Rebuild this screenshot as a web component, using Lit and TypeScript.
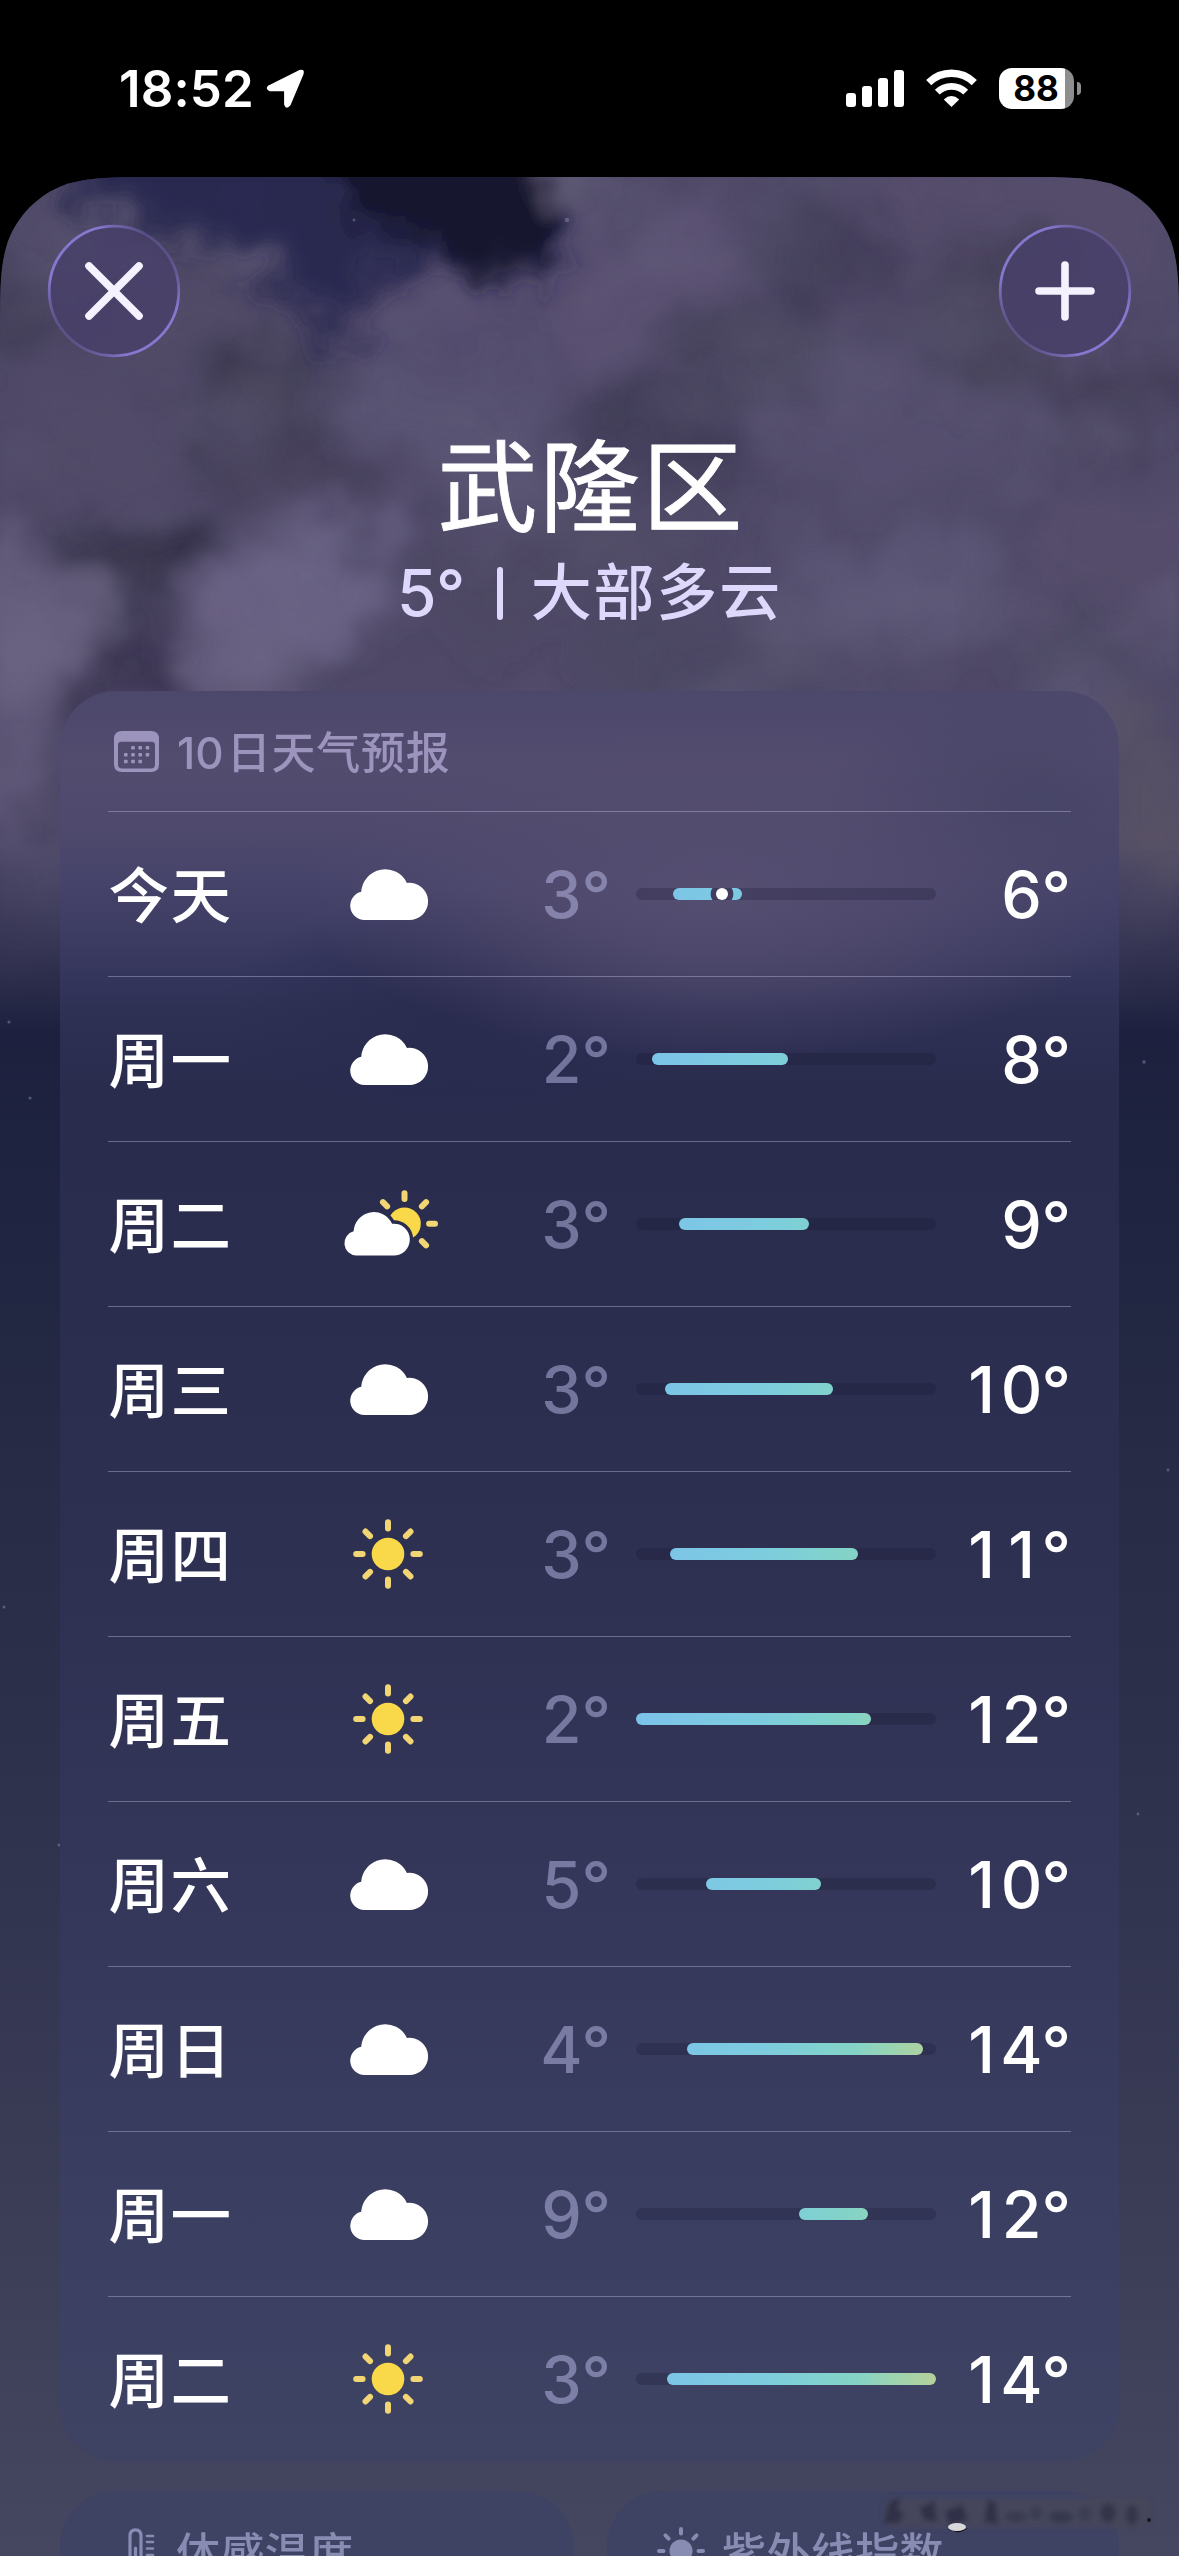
import { LitElement, html, svg, css } from "lit";
import { customElement, property } from "lit/decorators.js";

type Icon = "cloud" | "sun" | "partly";

interface Day {
  name: string;
  icon: Icon;
  low: number;
  high: number;
  from: number;
  to: number;
  now?: number;
}

const DAYS: Day[] = [
  { name: "今天", icon: "cloud", low: 3, high: 6, from: 37, to: 106, now: 86 },
  { name: "周一", icon: "cloud", low: 2, high: 8, from: 16, to: 152 },
  { name: "周二", icon: "partly", low: 3, high: 9, from: 43, to: 173 },
  { name: "周三", icon: "cloud", low: 3, high: 10, from: 29, to: 197 },
  { name: "周四", icon: "sun", low: 3, high: 11, from: 34, to: 222 },
  { name: "周五", icon: "sun", low: 2, high: 12, from: 0, to: 235 },
  { name: "周六", icon: "cloud", low: 5, high: 10, from: 70, to: 185 },
  { name: "周日", icon: "cloud", low: 4, high: 14, from: 51, to: 287 },
  { name: "周一", icon: "cloud", low: 9, high: 12, from: 163, to: 232 },
  { name: "周二", icon: "sun", low: 3, high: 14, from: 31, to: 300 },
];

const CLOUD =
  "M14.3 51A14.3 14.3 0 0 1 11.2 22.8A24.1 24.1 0 0 1 57 14A18.6 18.6 0 1 1 58.4 51Z";

const ray = (deg: number, r1: number, r2: number) => {
  const a = (deg * Math.PI) / 180;
  const c = Math.cos(a);
  const s = Math.sin(a);
  return svg`<line x1=${c * r1} y1=${s * r1} x2=${c * r2} y2=${s * r2}></line>`;
};

// Equal-width digit cells keep the temperature columns aligned.
const digits = (n: number) => html`${[...String(n)].map((c) => html`<span class="digit">${c}</span>`)}°`;

@customElement("weather-icon")
export class WeatherIcon extends LitElement {
  @property() kind: Icon = "cloud";

  static styles = css`
    :host { display: block; line-height: 0; }
    svg { display: block; overflow: visible; }
    .rays { stroke: #f1d673; stroke-width: 6; stroke-linecap: round; }
    .disc { fill: #f9d849; }
    .cloud { fill: #fff; }
  `;

  render() {
    if (this.kind === "sun") {
      return html`<svg width="72" height="72" viewBox="-36 -36 72 72">
        <circle class="disc" r="16.3"></circle>
        <g class="rays">${[0, 45, 90, 135, 180, 225, 270, 315].map((d) => ray(d, 25.4, 31.8))}</g>
      </svg>`;
    }
    if (this.kind === "partly") {
      return html`<svg width="96" height="72" viewBox="-48 -36 96 72">
        <mask id="gap" maskUnits="userSpaceOnUse" x="-48" y="-40" width="110" height="90">
          <rect x="-48" y="-40" width="110" height="90" fill="#fff"></rect>
          <path transform="translate(-43.8 -12.2) scale(.84 .857)" d=${CLOUD} fill="#000" stroke="#000" stroke-width="8"></path>
        </mask>
        <g mask="url(#gap)"><circle class="disc" cx="16.5" cy="-.3" r="16.3"></circle></g>
        <g class="rays" transform="translate(16.5 -.3)">${[0, 45, 225, 270, 315].map((d) => ray(d, 24.6, 30.5))}</g>
        <path class="cloud" transform="translate(-43.8 -12.2) scale(.84 .857)" d=${CLOUD}></path>
      </svg>`;
    }
    return html`<svg width="77" height="51" viewBox="0 0 77 51"><path class="cloud" d=${CLOUD}></path></svg>`;
  }
}

@customElement("range-bar")
export class RangeBar extends LitElement {
  @property({ attribute: false }) day!: Day;

  static styles = css`
    :host { display: block; }
    .track { position: relative; width: 300px; height: 12px; border-radius: 6px; background: rgba(22, 20, 44, 0.24); }
    .fill {
      position: absolute; top: 0; height: 12px; border-radius: 6px;
      background-image: linear-gradient(90deg, #7cc2ea 0, #7dc9e3 28%, #7dcddc 46%, #80d1d0 60%, #85d3c5 74%, #9cd4b0 86%, #b5d09b 100%);
      background-size: 300px 12px;
    }
    .dot {
      position: absolute; top: 0; width: 12px; height: 12px; margin-left: -6px;
      border-radius: 50%; background: #fff;
    }
    .ring {
      position: absolute; top: 0; width: 24px; height: 12px; margin-left: -12px;
      background: radial-gradient(circle at 50% 50%, #403d60 0 10.8px, transparent 11.8px);
    }
  `;

  render() {
    const { from, to, now } = this.day;
    return html`<div class="track">
      <div class="fill" style="left:${from}px;width:${to - from}px;background-position:${-from}px 0"></div>
      ${now === undefined
        ? null
        : html`<div class="ring" style="left:${now}px"></div><div class="dot" style="left:${now}px"></div>`}
    </div>`;
  }
}

interface Puff { x: number; y: number; rx: number; ry: number; c: string; o: number }

const PUFFS: Puff[] = [
  { x: 1010, y: 230, rx: 200, ry: 110, c: "#564e6d", o: 0.8 },
  { x: 640, y: 290, rx: 110, ry: 90, c: "#5b5272", o: 0.9 },
  { x: 430, y: 350, rx: 140, ry: 80, c: "#554e6e", o: 0.9 },
  { x: 190, y: 310, rx: 90, ry: 60, c: "#524a67", o: 0.9 },
  { x: 830, y: 240, rx: 60, ry: 70, c: "#3f3c56", o: 0.8 },
  { x: 980, y: 310, rx: 80, ry: 70, c: "#413f56", o: 0.7 },
  { x: 20, y: 310, rx: 60, ry: 60, c: "#403d54", o: 0.7 },
  { x: 750, y: 350, rx: 110, ry: 50, c: "#47435d", o: 0.8 },
  { x: 270, y: 390, rx: 90, ry: 60, c: "#3d3a52", o: 0.9 },
  { x: 110, y: 440, rx: 90, ry: 60, c: "#514b68", o: 0.9 },
  { x: 450, y: 420, rx: 120, ry: 60, c: "#5a5373", o: 0.9 },
  { x: 660, y: 440, rx: 90, ry: 50, c: "#3f3b56", o: 0.8 },
  { x: 900, y: 440, rx: 150, ry: 60, c: "#554f6e", o: 0.9 },
  { x: 1100, y: 400, rx: 90, ry: 40, c: "#3d3a51", o: 0.8 },
  { x: 300, y: 480, rx: 90, ry: 40, c: "#433f59", o: 0.8 },
  { x: 1120, y: 540, rx: 90, ry: 70, c: "#544e6c", o: 0.9 },
  { x: 140, y: 575, rx: 85, ry: 65, c: "#34314a", o: 1 },
  { x: 140, y: 675, rx: 65, ry: 50, c: "#3b3752", o: 0.95 },
  { x: 15, y: 620, rx: 65, ry: 90, c: "#68617f", o: 0.9 },
  { x: 305, y: 595, rx: 105, ry: 65, c: "#6a6385", o: 0.95 },
  { x: 225, y: 665, rx: 70, ry: 50, c: "#6b6384", o: 0.85 },
  { x: 560, y: 570, rx: 140, ry: 50, c: "#4c4863", o: 0.8 },
  { x: 900, y: 590, rx: 130, ry: 60, c: "#5b5576", o: 0.9 },
  { x: 700, y: 660, rx: 110, ry: 40, c: "#4a4761", o: 0.8 },
  { x: 1080, y: 640, rx: 80, ry: 40, c: "#4b4762", o: 0.8 },
  { x: 1150, y: 790, rx: 45, ry: 90, c: "#565165", o: 0.9 },
  { x: 15, y: 760, rx: 45, ry: 80, c: "#615a79", o: 0.9 },
  { x: 50, y: 880, rx: 50, ry: 50, c: "#4a4667", o: 0.8 },
];

@customElement("night-sky")
export class NightSky extends LitElement {
  static styles = css`
    :host { display: block; }
    svg { display: block; }
  `;

  render() {
    return html`<svg width="1179" height="2379" viewBox="0 177 1179 2379">
      <defs>
        <linearGradient id="sky" gradientUnits="userSpaceOnUse" x1="0" y1="177" x2="0" y2="2556">
          <stop offset="0" stop-color="#1d2044"></stop>
          <stop offset=".34" stop-color="#1c203e"></stop>
          <stop offset=".45" stop-color="#202541"></stop>
          <stop offset=".54" stop-color="#272b45"></stop>
          <stop offset=".65" stop-color="#2d304b"></stop>
          <stop offset=".85" stop-color="#3b3d57"></stop>
          <stop offset="1" stop-color="#454660"></stop>
        </linearGradient>
        <linearGradient id="fade" gradientUnits="userSpaceOnUse" x1="0" y1="177" x2="0" y2="1060">
          <stop offset="0" stop-color="#fff"></stop>
          <stop offset=".76" stop-color="#fff"></stop>
          <stop offset=".88" stop-color="#777"></stop>
          <stop offset=".97" stop-color="#000"></stop>
        </linearGradient>
        <mask id="bank" maskUnits="userSpaceOnUse" x="0" y="177" width="1179" height="900">
          <rect x="0" y="177" width="1179" height="900" fill="url(#fade)"></rect>
        </mask>
        <filter id="soft" filterUnits="userSpaceOnUse" x="-100" y="77" width="1379" height="1100">
          <feGaussianBlur stdDeviation="20" result="b"></feGaussianBlur>
          <feTurbulence type="fractalNoise" baseFrequency=".009" numOctaves="5" seed="7" result="n"></feTurbulence>
          <feDisplacementMap in="b" in2="n" scale="130" xChannelSelector="R" yChannelSelector="G" result="d"></feDisplacementMap>
          <feGaussianBlur in="d" stdDeviation="4"></feGaussianBlur>
        </filter>
        <filter id="edge" filterUnits="userSpaceOnUse" x="-100" y="77" width="1379" height="400">
          <feGaussianBlur stdDeviation="12" result="b"></feGaussianBlur>
          <feTurbulence type="fractalNoise" baseFrequency=".018" numOctaves="4" seed="4" result="n"></feTurbulence>
          <feDisplacementMap in="b" in2="n" scale="80" xChannelSelector="R" yChannelSelector="G" result="d"></feDisplacementMap>
          <feGaussianBlur in="d" stdDeviation="4.5"></feGaussianBlur>
        </filter>
        <filter id="dark" x="0" y="0" width="100%" height="100%">
          <feTurbulence type="fractalNoise" baseFrequency=".006 .007" numOctaves="4" seed="11"></feTurbulence>
          <feColorMatrix values="0 0 0 0 .18  0 0 0 0 .17  0 0 0 0 .27  2.2 0 0 0 -.95"></feColorMatrix>
          <feGaussianBlur stdDeviation="4"></feGaussianBlur>
        </filter>
      </defs>
      <rect x="0" y="177" width="1179" height="2379" fill="url(#sky)"></rect>
      <g mask="url(#bank)">
        <rect x="0" y="177" width="1179" height="900" fill="#4f4967"></rect>
        <g filter="url(#soft)">
          ${PUFFS.map((p) => svg`<ellipse cx=${p.x} cy=${p.y} rx=${p.rx} ry=${p.ry} fill=${p.c} opacity=${p.o}></ellipse>`)}
        </g>
        <rect x="0" y="177" width="1179" height="900" filter="url(#dark)" opacity=".3"></rect>
      </g>
      <g filter="url(#edge)">
        <path fill="#262750" opacity=".95" d="M70 130H540L570 200L580 240L545 270L515 298L480 262L410 258L385 290L360 338L325 335L295 300L250 250L185 245L140 228L85 205Z"></path>
        <path fill="#14162e" d="M310 130H530L572 215L540 258L512 292L480 258L425 240L340 215Z"></path>
        <path fill="#5c5672" d="M535 140H610V192L568 206L538 195Z"></path>
      </g>
      <g fill="#8a8ab0" opacity=".5">
        <circle cx="567" cy="220" r="2.2"></circle><circle cx="354" cy="220" r="1.4"></circle>
        <circle cx="9" cy="1022" r="1.6"></circle><circle cx="30" cy="1098" r="1.6"></circle>
        <circle cx="1144" cy="1062" r="1.8"></circle><circle cx="1168" cy="1470" r="1.5"></circle>
        <circle cx="4" cy="1607" r="1.5"></circle><circle cx="59" cy="1845" r="1.5"></circle>
        <circle cx="1138" cy="1814" r="1.4"></circle>
      </g>
    </svg>`;
  }
}

@customElement("app-root")
export class AppRoot extends LitElement {
  static styles = css`
    :host {
      display: block; width: 1179px; height: 2556px; overflow: hidden; background: #000;
      font-family: Inter, "Noto Sans CJK SC", sans-serif; color: #fff;
    }
    svg { display: block; overflow: visible; }
    .status {
      height: 177px; box-sizing: border-box; padding: 57px 98px 0 119px;
      display: flex; justify-content: space-between; align-items: flex-start;
    }
    .clock { display: flex; align-items: center; gap: 12px; height: 62px; font-size: 51px; font-weight: 600; letter-spacing: 0.1px; }
    .clock svg { margin-top: 1px; }
    .radios { display: flex; align-items: center; height: 62px; }
    .signal { margin-right: 22px; }
    .wifi { margin-right: 22px; }
    .battery { display: flex; align-items: center; gap: 3px; }
    .cell {
      width: 75px; height: 41px; border-radius: 13px; box-sizing: border-box; padding-right: 1px;
      background: linear-gradient(90deg, #fff 66px, #8e8e8e 66px);
      color: #000; font-size: 35px; font-weight: 700; line-height: 41px; text-align: center;
    }
    .nub { width: 4px; height: 13px; border-radius: 0 4px 4px 0; background: #8e8e8e; }

    .sheet {
      position: relative; height: 2379px; overflow: hidden;
      clip-path: path("M0 157.5C0 112 0 89.4 7.7 65C17.4 38.4 38.4 17.4 65 7.7C89.4 0 112 0 157.5 0H1021.5C1067 0 1089.6 0 1114 7.7C1140.6 17.4 1161.6 38.4 1171.3 65C1179 89.4 1179 112 1179 157.5V2379H0Z");
    }
    .sky { position: absolute; inset: 0; }
    .page { position: relative; display: flex; flex-direction: column; }
    .actions { display: flex; justify-content: space-between; padding: 48px 48px 0; }
    .heading { display: flex; flex-direction: column; align-items: center; height: 334px; }
    .place {
      margin-top: 67px; font-size: 100px; line-height: 128px; letter-spacing: 2.4px; font-weight: 400;
      padding-left: 3px; -webkit-text-stroke: 0.9px #fff;
    }
    .now {
      display: flex; align-items: center; margin-top: 1px; height: 80px;
      color: #ddd8fc; font-size: 61px; line-height: 80px; font-weight: 500;
    }
    .now .deg { font-size: 64px; letter-spacing: -0.5px; }
    .now .sep { width: 6px; height: 53px; border-radius: 3px; background: #ddd8fc; margin: 0 28px 0 32px; }
    .now .sky-text { letter-spacing: 1.8px; }

    .panel { border-radius: 56px; }
    .forecast {
      margin: 0 60px; height: 1770px; box-sizing: border-box; padding: 0 48px;
      background:
        radial-gradient(ellipse 420px 170px at 660px 200px, rgba(86, 79, 114, 0.95), rgba(84, 77, 112, 0.6) 50%, rgba(80, 74, 110, 0) 100%),
        radial-gradient(ellipse 200px 120px at 960px 120px, rgba(64, 64, 98, 0.7), rgba(64, 64, 98, 0)),
        radial-gradient(ellipse 240px 120px at 400px 320px, rgba(40, 42, 78, 0.9), rgba(40, 42, 78, 0)),
        linear-gradient(180deg, #4c486b 0, #524c6f 70px, #4f4a6d 130px, #46436a 190px, #3a3a60 260px, #2e3054 320px, #2a2c4e 400px, #2b2d4e 600px, #2e3052 850px, #343759 1200px, #3b3f61 1550px, #3e4263 1770px);
    }
    .caption { display: flex; align-items: center; color: #9c94bd; font-size: 44px; font-weight: 500; letter-spacing: 0.8px; height: 120px; }
    .caption svg { flex: none; }
    .forecast .caption svg { margin: 0 18px 0 6px; }
    .forecast .caption span { margin-top: -3px; }
    .num { margin-right: 3px; letter-spacing: 0; }
    .row {
      display: grid; grid-template-columns: 200px 161px 140px 27px 300px 135px; align-items: center;
      height: 165px; box-sizing: border-box; border-top: 1px solid rgba(190, 188, 225, 0.42);
    }
    .day { font-size: 60.5px; font-weight: 500; letter-spacing: 1.5px; line-height: 80px; padding: 3px 0 0 0.5px; }
    .icon { display: flex; justify-content: center; padding-right: 1px; }
    .temp { font-size: 64.5px; font-weight: 500; text-align: right; line-height: 80px; padding-top: 1px; }
    .digit { display: inline-flex; justify-content: center; width: 40px; }
    .low { color: rgba(192, 192, 236, 0.49); margin-right: -2px; }
    .bar { grid-column: 5; }

    .tiles { display: grid; grid-template-columns: 514px 512px; gap: 33px; padding: 30px 60px 0; }
    .tile { height: 400px; background: #3e4263; padding: 0 0 0 68px; }
    .tile .caption { color: #888bb2; letter-spacing: 0.4px; }
    .tile .caption .term { margin-right: 21px; }
    .tile.uv { padding-left: 50px; }
    .tile .caption .uvi { margin-right: 17px; }
    .smudge { position: absolute; left: 870px; top: 2310px; }
  `;

  private ring(label: string, glyph: unknown) {
    return html`<svg width="132" height="132" viewBox="0 0 132 132" role="button" aria-label=${label}>
      <defs>
        <linearGradient id="rim" x1="1" y1="0" x2="0" y2="1">
          <stop offset=".1" stop-color="#7d6dc0" stop-opacity=".15"></stop>
          <stop offset=".32" stop-color="#8677cf" stop-opacity="1"></stop>
          <stop offset=".7" stop-color="#8677cf" stop-opacity="1"></stop>
          <stop offset=".9" stop-color="#7d6dc0" stop-opacity=".15"></stop>
        </linearGradient>
      </defs>
      <circle cx="66" cy="66" r="64.8" fill="#483f68" fill-opacity=".85" stroke="url(#rim)" stroke-width="2.8"></circle>
      <g stroke="#f5f2ff" stroke-width="7.6" stroke-linecap="round">${glyph}</g>
    </svg>`;
  }

  render() {
    return html`
      <div class="status">
        <div class="clock">
          <span>18:52</span>
          <svg width="39" height="40" viewBox="0 0 39 40">
            <path d="M3 17.5L34 2.2Q37.600 .9 36.400 4.700L23.500 35.500Q20.500 39.500 19.300 35.500V22.500Q19.300 21 17.800 21H4Q.500 19.800 3 17.500Z" fill="#fff" stroke="#fff" stroke-width="2.400" stroke-linejoin="round"></path>
          </svg>
        </div>
        <div class="radios">
          <svg class="signal" width="58" height="37" viewBox="0 0 58 37" fill="#fff">
            <rect x="0" y="23" width="10" height="14" rx="3"></rect>
            <rect x="16" y="16" width="10" height="21" rx="3"></rect>
            <rect x="32" y="8" width="10" height="29" rx="3"></rect>
            <rect x="48" y="0" width="10" height="37" rx="3"></rect>
          </svg>
          <svg class="wifi" width="51" height="37" viewBox="0 0 51 37">
            <path d="M2.700 13.200A32.500 32.500 0 0 1 48.300 13.200" fill="none" stroke="#fff" stroke-width="7.400" transform="translate(0 -.6)"></path>
            <path d="M11.300 22.200A20 20 0 0 1 39.700 22.200" fill="none" stroke="#fff" stroke-width="6.800"></path>
            <path d="M25.500 37L17.800 29.400Q25.500 22.600 33.200 29.400Z" fill="#fff"></path>
          </svg>
          <div class="battery"><div class="cell">88</div><div class="nub"></div></div>
        </div>
      </div>
      <div class="sheet">
        <night-sky class="sky"></night-sky>
        <div class="page">
          <div class="actions">
            ${this.ring("关闭", svg`<path d="M41 41L91 91M91 41L41 91"></path>`)}
            ${this.ring("添加", svg`<path d="M66 40V92M40 66H92"></path>`)}
          </div>
          <div class="heading">
            <div class="place">武隆区</div>
            <div class="now"><span class="deg">5°</span><span class="sep"></span><span class="sky-text">大部多云</span></div>
          </div>
          <div class="panel forecast">
            <div class="caption">
              <svg width="45" height="41" viewBox="0 0 45 41" fill="#9c94bd">
                <path fill-rule="evenodd" d="M8 0H37Q45 0 45 8V33Q45 41 37 41H8Q0 41 0 33V8Q0 0 8 0ZM7.500 10.800Q4 10.800 4 14V33.500Q4 37.400 8 37.400H37Q41 37.400 41 33.500V14Q41 10.800 37.500 10.800Z"></path>
                ${[[19, 16.7], [26.2, 16.7], [33.5, 16.7], [11.8, 23.7], [19, 23.7], [26.2, 23.7], [33.5, 23.7], [11.8, 30.5], [19, 30.5], [26.2, 30.5]].map(
                  ([x, y]) => svg`<rect x=${x - 1.8} y=${y - 1.8} width="3.6" height="3.6" rx=".8"></rect>`
                )}
              </svg>
              <span><span class="num">10</span>日天气预报</span>
            </div>
            ${DAYS.map(
              (d) => html`<div class="row">
                <div class="day">${d.name}</div>
                <div class="icon"><weather-icon .kind=${d.icon}></weather-icon></div>
                <div class="temp low">${digits(d.low)}</div>
                <range-bar class="bar" .day=${d}></range-bar>
                <div class="temp">${digits(d.high)}</div>
              </div>`
            )}
          </div>
          <div class="tiles">
            <div class="panel tile">
              <div class="caption">
                <svg class="term" width="27" height="46" viewBox="0 0 27 46" fill="none" stroke="#888bb2" stroke-width="3.200" stroke-linecap="round">
                  <path d="M2 30V8Q2 1.800 7.500 1.800T13 8V30A8.500 8.500 0 1 1 2 30Z"></path>
                  <path d="M7.500 20V34"></path>
                  <path d="M19 8H25M19 14H25M19 20.500H25M19 27H25" stroke-width="2.600"></path>
                </svg>
                <span>体感温度</span>
              </div>
            </div>
            <div class="panel tile uv">
              <div class="caption">
                <svg class="uvi" width="48" height="48" viewBox="-24 -24 48 48" stroke="#888bb2" stroke-width="4" stroke-linecap="round">
                  <circle r="11.500" fill="#888bb2" stroke="none"></circle>
                  ${[0, 45, 90, 135, 180, 225, 270, 315].map((d) => ray(d, 17.5, 22))}
                </svg>
                <span>紫外线指数</span>
              </div>
            </div>
          </div>
        </div>
        <svg class="smudge" width="290" height="60" viewBox="870 2487 290 60">
          <defs><filter id="blur" x="-30%" y="-60%" width="160%" height="220%"><feGaussianBlur stdDeviation="2.500"></feGaussianBlur></filter></defs>
          <g filter="url(#blur)">
            <rect x="884" y="2498" width="266" height="30" rx="8" fill="#47475a" opacity=".75"></rect>
            <g fill="#2b2d42" opacity=".8">
              <path d="M889 2502L901 2497L897 2510L904 2512L900 2523L884 2524Z"></path>
              <path d="M920 2508L934 2501L937 2522L924 2520Z"></path>
              <path d="M945 2512L962 2504L968 2520L950 2526Z"></path>
              <path d="M984 2522L988 2500L995 2502L998 2524Z"></path>
              <ellipse cx="1016" cy="2517" rx="11" ry="5" opacity=".6"></ellipse>
              <ellipse cx="1036" cy="2513" rx="6" ry="7" opacity=".4"></ellipse>
              <ellipse cx="1061" cy="2517" rx="12" ry="6" opacity=".7"></ellipse>
              <ellipse cx="1085" cy="2514" rx="6" ry="8" opacity=".4"></ellipse>
              <ellipse cx="1108" cy="2513" rx="8" ry="10" opacity=".8"></ellipse>
              <ellipse cx="1132" cy="2515" rx="6" ry="10" opacity=".8"></ellipse>
            </g>
          </g>
          <path d="M946 2529Q956 2534 968 2528Q962 2533 956 2532Z" fill="#111"></path>
          <ellipse cx="957" cy="2527" rx="9" ry="4" fill="#d8d8dc"></ellipse>
          <circle cx="1149" cy="2520" r="2" fill="#16171f"></circle>
        </svg>
      </div>
    `;
  }
}
